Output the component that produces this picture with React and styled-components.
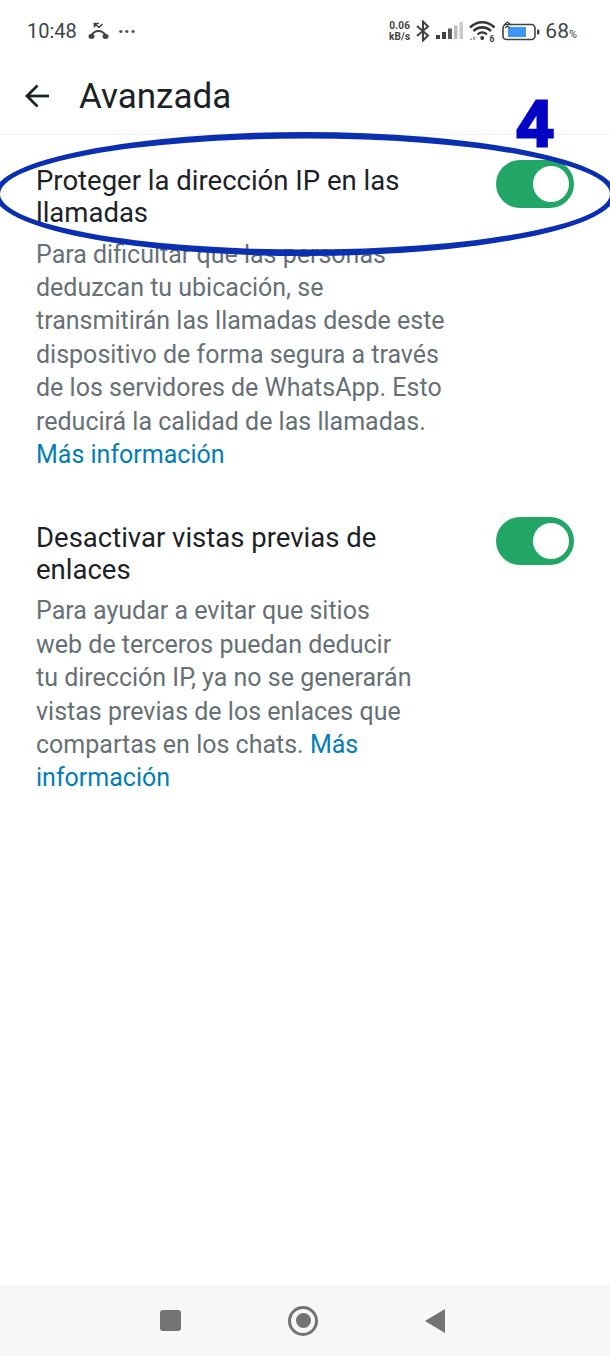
import React from "react";
import styled, { createGlobalStyle } from "styled-components";

const GlobalStyle = createGlobalStyle`
    html, body{
        margin: 0;
        padding: 0;
        background: #fff;
    }
    body{
        font-family: Roboto, "Noto Sans", sans-serif;
    }
`;

const settings = [
    {
        title: ["Proteger la dirección IP en las", "llamadas"],
        body: [
            "Para dificultar que las personas",
            "deduzcan tu ubicación, se",
            "transmitirán las llamadas desde este",
            "dispositivo de forma segura a través",
            "de los servidores de WhatsApp. Esto",
            "reducirá la calidad de las llamadas.",
        ],
        link: ["Más información"],
    },
    {
        title: ["Desactivar vistas previas de", "enlaces"],
        body: [
            "Para ayudar a evitar que sitios",
            "web de terceros puedan deducir",
            "tu dirección IP, ya no se generarán",
            "vistas previas de los enlaces que",
            "compartas en los chats. ",
        ],
        link: ["Más", "información"],
    },
];

const BackArrow = () => (
    <svg width="28" height="28" viewBox="0 0 28 28" fill="none" stroke="#1b2327" strokeWidth="2.8">
        <path d="M26 14H4" />
        <path d="M14.500 3.500L4 14l10.500 10.500" />
    </svg>
);

const HangupIcon = () => (
    <svg width="21" height="18" viewBox="0 0 21 18" fill="none" stroke="#3f4346">
        <path d="M3 14c2-3.600 4.500-5 7.500-5s5.500 1.400 7.500 5" strokeWidth="2" />
        <ellipse cx="3.500" cy="14.500" rx="3" ry="2.400" fill="#3f4346" stroke="none" />
        <ellipse cx="17.500" cy="14.500" rx="3" ry="2.400" fill="#3f4346" stroke="none" />
        <path d="M5.500 1.500h5.500M6.500 1.500l4.500 4 3.500-3.500M6.500 1.500v4" strokeWidth="1.600" />
    </svg>
);

const BluetoothIcon = () => (
    <svg width="14" height="22" viewBox="0 0 14 22" fill="none" stroke="#3f4346" strokeWidth="2">
        <path d="M1 6l11 9.500L7 20.500v-19l5 5L1 16" />
    </svg>
);

const SignalIcon = () => (
    <svg width="27" height="18" viewBox="0 0 27 18">
        <rect x="0" y="13" width="4" height="4" fill="#3f4346" />
        <rect x="6" y="10" width="4" height="7" fill="#3f4346" />
        <rect x="12" y="6.500" width="4" height="10.500" fill="#55595c" />
        <rect x="18" y="3.500" width="3.500" height="13.500" fill="#b9bcbe" />
        <rect x="23.500" y="0" width="3.500" height="17" fill="#c6c8ca" />
    </svg>
);

const WifiIcon = () => (
    <svg width="27" height="22" viewBox="0 0 27 22" fill="none" stroke="#34383b">
        <path d="M1 7.500C8 .4 18.500.4 25.500 7.500" strokeWidth="2.600" />
        <path d="M4.500 11c5-4.800 12.500-4.800 17.500 0" strokeWidth="2.600" />
        <path d="M8.500 14.500c3-2.600 6.500-2.600 9.500 0" strokeWidth="2.200" />
        <circle cx="13.200" cy="18" r="2" fill="#34383b" stroke="none" />
        <path d="M2 20v-1.500M5 20v-3.500M7.500 17.500v.5" strokeWidth="1.300" stroke="#777" />
        <text x="20.500" y="21.500" fontFamily="Roboto" fontWeight="700" fontSize="8.500" fill="#34383b" stroke="none">6</text>
    </svg>
);

const BatteryIcon = () => (
    <svg width="38" height="22" viewBox="0 0 38 22">
        <rect x="1" y="4.500" width="32" height="15" rx="3.500" fill="none" stroke="#3f4346" strokeWidth="1.600" />
        <rect x="6" y="7" width="18" height="10" fill="#3d96f2" />
        <rect x="35" y="9.500" width="2.400" height="5" rx="1" fill="#3f4346" />
        <path d="M2 5l3.500-3L9 5M3 8l2.500-2L8 8" fill="none" stroke="#3f4346" strokeWidth="1.300" />
    </svg>
);

// Blue marker ring around the first row: two ellipses, so the line is heavier along the top and bottom
const MarkerRing = () => (
    <RingSvg viewBox="0 0 610 130">
        <path
            fillRule="evenodd"
            fill="#0a2fb0"
            d="M-6 59a311 62 0 1 0 622 0a311 62 0 1 0 -622 0ZM0 59a305 55.500 0 1 0 610 0a305 55.500 0 1 0 -610 0Z"
        />
    </RingSvg>
);

const App = () => {
    return (
        <Page>
            <GlobalStyle />
            <StatusBar>
                <StatusGroup>
                    <Clock>10:48</Clock>
                    <HangupIcon />
                    <Dots>···</Dots>
                </StatusGroup>
                <StatusGroup>
                    <NetSpeed>
                        <span>0.06</span>
                        <span>kB/s</span>
                    </NetSpeed>
                    <BluetoothIcon />
                    <SignalIcon />
                    <WifiIcon />
                    <BatteryIcon />
                    <BatteryLevel>68<small>%</small></BatteryLevel>
                </StatusGroup>
            </StatusBar>

            <Toolbar>
                <BackArrow />
                <Title>Avanzada</Title>
            </Toolbar>

            <Content>
                <MarkerRing />
                <StepNumber>4</StepNumber>
                {settings.map((item) => (
                    <SettingRow key={item.title[0]}>
                        <SettingText>
                            <SettingTitle>
                                {item.title.map((line) => <Line key={line}>{line}</Line>)}
                            </SettingTitle>
                            <SettingBody>
                                {item.body.map((line, i) => (
                                    <Line key={line}>
                                        {line}
                                        {i === item.body.length - 1 && item.link.length > 1 && <InfoLink>{item.link[0]}</InfoLink>}
                                    </Line>
                                ))}
                                <Line><InfoLink>{item.link[item.link.length - 1]}</InfoLink></Line>
                            </SettingBody>
                        </SettingText>
                        <Toggle />
                    </SettingRow>
                ))}
            </Content>

            <NavBar>
                <NavSquare />
                <NavHome><NavHomeDot /></NavHome>
                <NavBack />
            </NavBar>
        </Page>
    );
};

const Page = styled.div`
    width: 610px;
    height: 1356px;
    display: flex;
    flex-direction: column;
    overflow: hidden;
    background: #fff;
`;

const StatusBar = styled.div`
    height: 62px;
    box-sizing: border-box;
    padding: 0 33px 1px 27px;
    display: flex;
    align-items: center;
    justify-content: space-between;
`;

const StatusGroup = styled.div`
    display: flex;
    align-items: center;
    gap: 6px;
`;

const Clock = styled.span`
    font-size: 20px;
    color: #404447;
    margin-right: 5px;
`;

const Dots = styled.span`
    font-size: 20px;
    font-weight: 700;
    color: #4b4f52;
    line-height: 1;
    margin-left: 3px;
`;

const NetSpeed = styled.div`
    display: flex;
    flex-direction: column;
    font-size: 10px;
    font-weight: 700;
    line-height: 11px;
    letter-spacing: 0.2px;
    color: #3f4346;
    text-align: center;
`;

const BatteryLevel = styled.span`
    font-size: 21px;
    color: #404447;
    margin-left: -1px;

    & > small{
        font-size: 11px;
    }
`;

const Toolbar = styled.div`
    height: 73px;
    box-sizing: border-box;
    padding: 0 0 4px 23px;
    display: flex;
    align-items: center;
    gap: 28px;
    border-bottom: 1px solid #f0f1f1;
`;

const Title = styled.h1`
    margin: 0;
    font-size: 35px;
    font-weight: 400;
    color: #1b2327;
`;

const Content = styled.main`
    position: relative;
    flex: 1;
    padding-top: 30px;
    display: flex;
    flex-direction: column;
    gap: 50.500px;
`;

const RingSvg = styled.svg`
    position: absolute;
    left: 0;
    top: 0;
    width: 610px;
    height: 130px;
    overflow: visible;
    z-index: 2;
`;

const StepNumber = styled.span`
    position: absolute;
    left: 517px;
    top: -48px;
    font-family: "Liberation Sans", sans-serif;
    font-size: 64px;
    font-weight: 700;
    line-height: 74px;
    color: #0404c4;
    -webkit-text-stroke: 3px #0404c4;
    z-index: 3;
`;

const SettingRow = styled.section`
    display: flex;
    justify-content: space-between;
    align-items: flex-start;
    padding: 0 36px;
`;

const SettingText = styled.div`
    width: 420px;
`;

const SettingTitle = styled.div`
    font-size: 27.500px;
    line-height: 32px;
    color: #1b2327;
`;

const SettingBody = styled.div`
    margin-top: 8.500px;
    font-size: 25px;
    line-height: 33.400px;
    color: #667075;
`;

const Line = styled.div`
    white-space: nowrap;
`;

const InfoLink = styled.span`
    color: #027eb5;
`;

const Toggle = styled.div`
    width: 78px;
    height: 48px;
    margin-top: -5px;
    flex-shrink: 0;
    box-sizing: border-box;
    border-radius: 24px;
    background: #21a665;
    padding: 6px 5px;
    display: flex;
    justify-content: flex-end;

    &::after{
        content: "";
        width: 36px;
        height: 36px;
        border-radius: 50%;
        background: #fff;
    }
`;

const NavBar = styled.nav`
    height: 71px;
    background: #f6f7f9;
    display: flex;
    align-items: center;
    padding-left: 160px;
    gap: 107px;
`;

const NavSquare = styled.div`
    width: 21px;
    height: 21px;
    border-radius: 3px;
    background: #737373;
`;

const NavHome = styled.div`
    width: 30px;
    height: 30px;
    box-sizing: border-box;
    border: 3px solid #737373;
    border-radius: 50%;
    display: flex;
    align-items: center;
    justify-content: center;
`;

const NavHomeDot = styled.div`
    width: 15px;
    height: 15px;
    border-radius: 50%;
    background: #737373;
`;

const NavBack = styled.div`
    width: 0;
    height: 0;
    border-top: 12px solid transparent;
    border-bottom: 12px solid transparent;
    border-right: 20px solid #737373;
`;

export default App;
